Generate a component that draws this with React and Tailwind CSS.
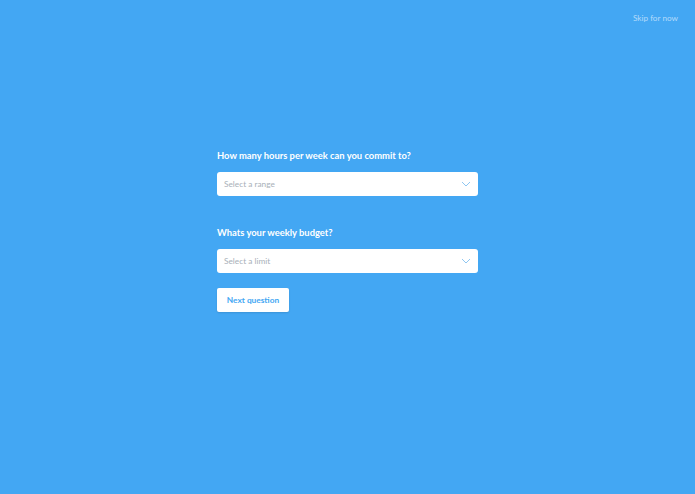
export default function App() {
  return (
    <div className="min-h-screen w-full bg-[#43a7f3] font-['Lato',sans-serif] relative">
      <div className="flex justify-end pr-[17px] pt-[12px]">
        <a className="text-[8.2px] text-[#b3dafb] leading-[12px]">Skip for now</a>
      </div>
      <main className="mx-auto w-[261px] pt-[126px]">
        <label className="block text-[9.4px] font-bold text-white leading-[12px]">
          How many hours per week can you commit to?
        </label>
        <div className="mt-[10px] h-[24px] bg-white rounded-[3px] flex items-center justify-between pl-[7px] pr-[7px]">
          <span className="text-[8.3px] text-[#a8b0b8]">Select a range</span>
          <svg width="10" height="6" viewBox="0 0 10 6" fill="none">
            <path d="M1 1l4 4 4-4" stroke="#8fc7f2" strokeWidth="1" />
          </svg>
        </div>
        <label className="block mt-[31px] text-[9.4px] font-bold text-white leading-[12px]">
          Whats your weekly budget?
        </label>
        <div className="mt-[10px] h-[24px] bg-white rounded-[3px] flex items-center justify-between pl-[7px] pr-[7px]">
          <span className="text-[8.3px] text-[#a8b0b8]">Select a limit</span>
          <svg width="10" height="6" viewBox="0 0 10 6" fill="none">
            <path d="M1 1l4 4 4-4" stroke="#8fc7f2" strokeWidth="1" />
          </svg>
        </div>
        <button className="mt-[15px] h-[24px] w-[72px] bg-white rounded-[2px] shadow-[0_1px_2px_rgba(0,0,0,0.12)] text-[8.3px] font-bold text-[#43a7f3]">
          Next question
        </button>
      </main>
    </div>
  );
}
